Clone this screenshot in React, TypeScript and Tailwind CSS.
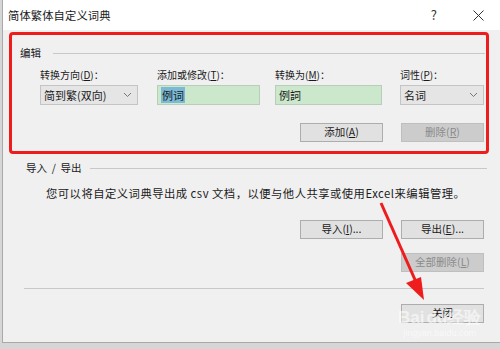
import React from 'react';

const font = { fontFamily: '"Noto Sans CJK SC", "Noto Sans", sans-serif' };

function Btn({ children, disabled = false }: { children: React.ReactNode; disabled?: boolean }) {
  return (
    <div
      className={`w-[83px] h-[19px] flex items-center justify-center border text-[10.5px] leading-none ${
        disabled ? 'bg-[#cccccc] border-[#bfbfbf] text-[#8a8a8a]' : 'bg-[#e1e1e1] border-[#adadad] text-[#1a1a1a]'
      }`}
    >
      {children}
    </div>
  );
}

function Combo({ text, width }: { text: string; width: string }) {
  return (
    <div className={`${width} h-[20px] flex items-center justify-between border border-[#c4c4c4] bg-[#e5e5e5] pl-[3px] pr-[5px] text-[11px]`}>
      <span>{text}</span>
      <svg width="9" height="6" viewBox="0 0 9 6" fill="none" stroke="#777" strokeWidth="1">
        <path d="M1 1l3.5 3.5L8 1" />
      </svg>
    </div>
  );
}

function Field({ children, width }: { children: React.ReactNode; width: string }) {
  return (
    <div className={`${width} h-[20px] flex items-center border border-[#b9cdb9] bg-[#cbe7cc] pl-[3px] text-[11px]`}>
      {children}
    </div>
  );
}

function Label({ children }: { children: React.ReactNode }) {
  return <div className="h-[16px] flex items-center text-[10px] leading-none text-[#1a1a1a] mb-[2px]">{children}</div>;
}

export default function App() {
  return (
    <div className="relative w-[500px] h-[349px] bg-[#d6d6d6] overflow-hidden text-[#1a1a1a]" style={font}>
      <div className="ml-[2px] w-[498px] h-[343px] border-l border-b border-[#a9a9a9] bg-[#f0f0f0] flex flex-col">
        {/* title bar */}
        <div className="h-[30px] bg-white flex items-center pl-[5px] pr-[16px]">
          <span className="text-[11.3px] tracking-[0.1px]">简体繁体自定义词典</span>
          <span className="ml-auto text-[13px] text-[#333]">?</span>
          <svg className="ml-[36px]" width="11" height="11" viewBox="0 0 11 11" stroke="#333" strokeWidth="1">
            <path d="M0.5 0.5l10 10M10.5 0.5l-10 10" />
          </svg>
        </div>

        {/* edit group, highlighted */}
        <div className="ml-[6px] mt-[2px] w-[480px] h-[122px] border-[3px] border-[#ee1c1c] rounded-[4px] flex flex-col">
          <div className="flex items-center mt-[10px] pl-[8px] pr-[1px] h-[16px]">
            <span className="text-[10.5px]">编辑</span>
            <div className="flex-1 ml-[12px] h-px bg-[#c8c8c8]" />
          </div>
          <div className="flex mt-[6px] pl-[28px]">
            <div className="flex flex-col w-[117px]">
              <Label>
                转换方向(<u>D</u>)：
              </Label>
              <Combo text="简到繁(双向)" width="w-[98px]" />
            </div>
            <div className="flex flex-col w-[118px]">
              <Label>
                添加或修改(<u>T</u>)：
              </Label>
              <Field width="w-[103px]">
                <span className="bg-[#7bbad6] px-px">例词</span>
              </Field>
            </div>
            <div className="flex flex-col w-[125px]">
              <Label>
                转换为(<u>M</u>)：
              </Label>
              <Field width="w-[107px]">例詞</Field>
            </div>
            <div className="flex flex-col">
              <Label>
                词性(<u>P</u>)：
              </Label>
              <Combo text="名词" width="w-[84px]" />
            </div>
          </div>
          <div className="flex mt-[18px] pl-[288px] gap-[18px]">
            <Btn>
              添加(<u>A</u>)
            </Btn>
            <Btn disabled>
              删除(<u>R</u>)
            </Btn>
          </div>
        </div>

        {/* import / export */}
        <div className="flex items-center mt-[6px] pl-[23px] pr-[13px] h-[16px]">
          <span className="text-[10.5px] whitespace-pre">导入  /  导出</span>
          <div className="flex-1 ml-[8px] h-px bg-[#c8c8c8]" />
        </div>
        <div className="mt-[9px] pl-[43px] text-[11.3px] tracking-[0.5px] h-[16px] leading-[16px] whitespace-nowrap">
          您可以将自定义词典导出成 csv 文档，以便与他人共享或使用Excel来编辑管理。
        </div>
        <div className="flex mt-[19px] pl-[297px] gap-[18px]">
          <Btn>
            导入(<u>I</u>)...
          </Btn>
          <Btn>
            导出(<u>E</u>)...
          </Btn>
        </div>
        <div className="flex mt-[14px] pl-[398px]">
          <Btn disabled>
            全部删除(<u>L</u>)
          </Btn>
        </div>
        <div className="mt-[16px] ml-[21px] w-[460px] h-px bg-[#c8c8c8]" />
        <div className="flex mt-[15px] pl-[398px]">
          <Btn>关闭</Btn>
        </div>
      </div>

      {/* annotation arrow */}
      <svg className="absolute left-0 top-0 pointer-events-none" width="500" height="349">
        <line x1="381" y1="203" x2="416" y2="282" stroke="#ee1c1c" strokeWidth="3" />
        <polygon points="424,300 406,283 421,277" fill="#ee1c1c" />
      </svg>

      {/* watermark */}
      <div className="absolute left-[398px] top-[309px] flex flex-col items-center text-white/60 pointer-events-none whitespace-nowrap">
        <span className="text-[17px] font-bold leading-none" style={{ fontFamily: '"Liberation Sans", sans-serif' }}>
          Bai<span className="ml-[2px]">du</span>经验
        </span>
        <span className="text-[9px] leading-none mt-[3px]" style={{ fontFamily: '"Liberation Sans", sans-serif' }}>
          jingyan.baidu.com
        </span>
      </div>
    </div>
  );
}
